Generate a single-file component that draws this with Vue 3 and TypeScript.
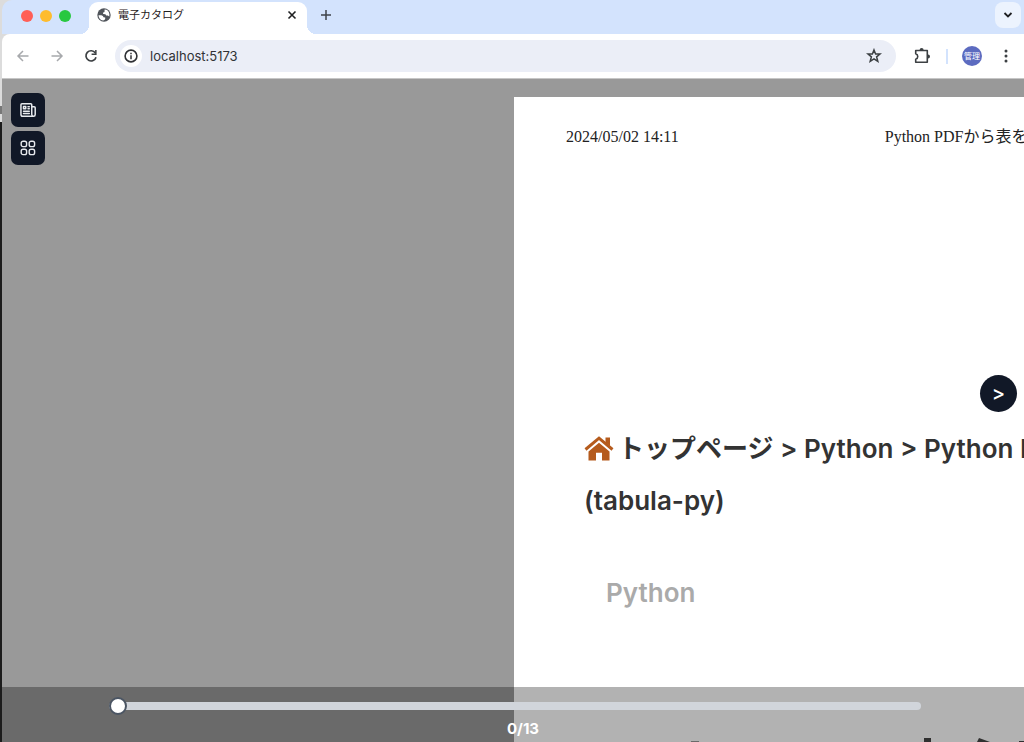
<script setup lang="ts">
import { ref } from 'vue'

const address = ref('localhost:5173')
const page = ref(0)
const total = 13

function next(): void {
  if (page.value < total) page.value++
}
</script>

<template>
  <div class="window">
    <header class="tabstrip">
      <div class="lights">
        <button class="light red" aria-label="閉じる"></button>
        <button class="light yellow" aria-label="最小化"></button>
        <button class="light green" aria-label="拡大"></button>
      </div>
      <div class="tab">
        <svg class="favicon" viewBox="0 0 14 14" aria-hidden="true">
          <circle cx="7" cy="7" r="6.7" fill="#50545a" />
          <path d="M1.5 7.2 4.4 7.3Q6.4 7.6 6.5 9.3L8.2 9.5V11.1Q7.6 12.3 6.1 12.4 1.7 11.8 1.5 7.2ZM7.6 1.6Q11.8 1.7 12.4 6.2L12.3 8.4 10.8 7.4H9.2L8.4 6.2 6.2 6 5.9 4.7 7.5 4.1Z" fill="#fff" />
        </svg>
        <span class="tab-title">電子カタログ</span>
        <button class="icon-button tab-close" aria-label="タブを閉じる">
          <svg width="10" height="10" viewBox="0 0 10 10"><path d="M1.5 1.5 8.5 8.5M8.5 1.5 1.5 8.5" stroke="#1f2022" stroke-width="1.6" /></svg>
        </button>
      </div>
      <button class="icon-button new-tab" aria-label="新しいタブ">
        <svg width="12" height="12" viewBox="0 0 12 12"><path d="M6 1V11M1 6H11" stroke="#3f4349" stroke-width="1.5" /></svg>
      </button>
      <button class="icon-button tab-search" aria-label="タブを検索">
        <svg width="10" height="8" viewBox="0 0 10 8"><path d="M1.5 2 5 5.5 8.5 2" fill="none" stroke="#1f2022" stroke-width="1.8" /></svg>
      </button>
    </header>

    <div class="toolbar">
      <button class="icon-button nav" aria-label="戻る">
        <svg width="14" height="14" viewBox="0 0 14 14"><path d="M12.5 7H2M7 2 2 7 7 12" fill="none" stroke="#a7a9ac" stroke-width="1.5" /></svg>
      </button>
      <button class="icon-button nav" aria-label="進む">
        <svg width="14" height="14" viewBox="0 0 14 14"><path d="M1.5 7H12M7 2 12 7 7 12" fill="none" stroke="#a7a9ac" stroke-width="1.5" /></svg>
      </button>
      <button class="icon-button nav" aria-label="再読み込み">
        <svg width="14" height="14" viewBox="0 0 14 14"><path d="M11.3 4A5.1 5.1 0 1 0 12 8.2" fill="none" stroke="#3c4043" stroke-width="1.7" /><path d="M12.6 1V6H7.6V4.6H11.1V1Z" fill="#3c4043" /></svg>
      </button>
      <div class="omnibox">
        <button class="icon-button site-info" aria-label="サイト情報">
          <svg width="14" height="14" viewBox="0 0 14 14"><circle cx="7" cy="7" r="5.9" fill="none" stroke="#303236" stroke-width="1.6" /><path d="M7 6.2V10.2M7 3.8V5.2" stroke="#303236" stroke-width="1.5" /></svg>
        </button>
        <input v-model="address" class="address" type="text" aria-label="アドレス" />
        <button class="icon-button" aria-label="ブックマーク">
          <svg width="16" height="16" viewBox="0 0 16 16"><path d="M8 1.9 9.6 6H14L10.6 8.8 11.8 13.4 8 10.9 4.2 13.4 5.4 8.8 2 6H6.4Z" fill="none" stroke="#3c4043" stroke-width="1.5" /></svg>
        </button>
      </div>
      <button class="icon-button extensions" aria-label="拡張機能">
        <svg width="18" height="18" viewBox="0 0 18 18">
          <path d="M2.7 3.5H14.3V15.3H2.7V12.2A2.8 2.8 0 0 0 2.7 6.8Z" fill="none" stroke="#3c4043" stroke-width="1.6" stroke-linejoin="round" />
          <path d="M6.6 3A2 2 0 0 1 10.6 3ZM15 7.4A2 2 0 0 1 15 11.4Z" fill="#3c4043" />
        </svg>
      </button>
      <span class="divider"></span>
      <button class="avatar" aria-label="プロフィール 管理">管理</button>
      <button class="icon-button menu" aria-label="メニュー">
        <svg width="4" height="14" viewBox="0 0 4 14" fill="#3c4043"><circle cx="2" cy="2" r="1.5" /><circle cx="2" cy="7" r="1.5" /><circle cx="2" cy="12" r="1.5" /></svg>
      </button>
    </div>

    <main class="viewer">
      <nav class="tools">
        <button class="tool" aria-label="見開き表示">
          <svg width="18" height="18" viewBox="0 0 24 24" fill="none" stroke="#e8eaee" stroke-width="2" stroke-linejoin="round" stroke-linecap="round">
            <path d="M17 7.5H20.2Q21.6 7.5 21.6 9V18Q21.6 20.4 19.4 20.4T17 18V5Q17 3.7 15.7 3.7H4Q2.6 3.7 2.6 5V18Q2.6 20.4 5 20.4H19.4M6 13.5H13.7M6 16.8H13.7M12 7.5H13.7M12 10.4H13.7M6 7.3H9V10.4H6Z" />
          </svg>
        </button>
        <button class="tool" aria-label="ページ一覧">
          <svg width="18" height="18" viewBox="0 0 18 18" fill="none" stroke="#e8eaee" stroke-width="1.4">
            <rect x="2.2" y="2.2" width="5.4" height="5.4" rx="1.9" /><rect x="10.2" y="2.2" width="5.4" height="5.4" rx="1.9" />
            <rect x="2.2" y="10.2" width="5.4" height="5.4" rx="1.9" /><rect x="10.2" y="10.2" width="5.4" height="5.4" rx="1.9" />
          </svg>
        </button>
      </nav>

      <article class="sheet">
        <div class="print-head">
          <time>2024/05/02 14:11</time>
          <span class="print-title">Python PDFから表を</span>
        </div>
        <div class="crumbs">
          <svg class="home" width="30" height="26" viewBox="0 0 30 26" aria-hidden="true">
            <path d="M1.5 13.5 15 2.2 28.5 13.5" fill="none" stroke="#b55b1d" stroke-width="3" />
            <path d="M21.5 1.5H26V10L21.5 6.5ZM15 6.7 25.5 15.4V24.5H18V16.8H12V24.5H4.5V15.4Z" fill="#b55b1d" />
          </svg>
          <span>トップページ &gt; Python &gt; Python P</span>
        </div>
        <div class="crumbs second">(tabula-py)</div>
        <div class="category">Python</div>
        <svg class="heading-tops" width="350" height="6" viewBox="0 0 350 6" aria-hidden="true">
          <path d="M250 2H257V6H250ZM305 2 316 6H303ZM345 5H350V6H345Z" fill="#464646" />
          <path d="M17 5H25V6H17Z" fill="#999" />
        </svg>
      </article>

      <button class="next" aria-label="次のページ" @click="next">&gt;</button>

      <footer class="pager">
        <input id="page-slider" v-model.number="page" class="slider" type="range" min="0" :max="total" />
        <label class="count" for="page-slider">{{ page }}/{{ total }}</label>
      </footer>
    </main>
  </div>
</template>

<style>
body {
  margin: 0;
}
</style>

<style scoped>
.window {
  box-sizing: border-box;
  display: flex;
  flex-direction: column;
  height: 100vh;
  padding-left: 2px;
  overflow: hidden;
  background: linear-gradient(#dcdcdc 0 106px, #777 106px 114px, #dcdcdc 114px 122px, #1c1c1c 122px);
  font-family: Inter, "Noto Sans CJK JP", sans-serif;
}

button {
  flex: none;
  padding: 0;
  border: 0;
  background: none;
  font-family: inherit;
}

svg {
  display: block;
  flex: none;
}

.icon-button {
  display: flex;
  align-items: center;
  justify-content: center;
}

.tabstrip {
  display: flex;
  flex: none;
  align-items: center;
  height: 34px;
  border-top-left-radius: 10px;
  background: #d3e3fd;
}

.lights {
  display: flex;
  gap: 7px;
  margin: 0 18px 3px 19px;
}

.light {
  width: 12px;
  height: 12px;
  border-radius: 50%;
}

.red {
  background: #ff5f57;
}

.yellow {
  background: #febc2e;
}

.green {
  background: #28c840;
}

.tab {
  position: relative;
  box-sizing: border-box;
  display: flex;
  align-items: center;
  width: 218px;
  height: 32px;
  align-self: flex-end;
  padding: 0 10px 6px 8px;
  border-radius: 9px 9px 0 0;
  background: #fff;
}

.tab::before,
.tab::after {
  content: "";
  position: absolute;
  bottom: 0;
  width: 9px;
  height: 9px;
}

.tab::before {
  right: 100%;
  background: radial-gradient(circle at 0 0, transparent 9px, #fff 9px);
}

.tab::after {
  left: 100%;
  background: radial-gradient(circle at 100% 0, transparent 9px, #fff 9px);
}

.favicon {
  width: 14px;
  height: 14px;
}

.tab-title {
  flex: 1;
  margin-left: 7px;
  color: #1f2022;
  font-size: 11px;
  line-height: 16px;
}

.new-tab {
  margin: 0 0 4px 13px;
}

.tab-search {
  width: 26px;
  height: 26px;
  margin: 0 3px 4px auto;
  border-radius: 8px;
  background: #ecf3fe;
}

.toolbar {
  box-sizing: border-box;
  display: flex;
  flex: none;
  align-items: center;
  height: 45px;
  padding: 0 16px 0 14px;
  border-bottom: 1px solid #c6c6c6;
  border-top-left-radius: 8px;
  background: #fff;
}

.nav {
  margin-right: 20px;
}

.omnibox {
  box-sizing: border-box;
  display: flex;
  flex: 1;
  align-items: center;
  height: 32px;
  margin-left: -3px;
  padding: 0 14px 0 5px;
  border-radius: 16px;
  background: #ebeef7;
}

.site-info {
  width: 22px;
  height: 22px;
  border-radius: 50%;
  background: #fff;
}

.address {
  flex: 1;
  min-width: 0;
  margin-left: 8px;
  padding: 0;
  border: 0;
  outline: 0;
  background: none;
  color: #303236;
  font-family: inherit;
  font-size: 13px;
  line-height: 20px;
}

.extensions {
  margin: 0 15px 0 17px;
}

.divider {
  width: 2px;
  height: 15px;
  margin-right: 14px;
  background: #d3e3fd;
}

.avatar {
  width: 20px;
  height: 20px;
  margin-right: 22px;
  border-radius: 50%;
  background: #5c6bc0;
  color: #fff;
  font-size: 8px;
  line-height: 20px;
}

.viewer {
  position: relative;
  display: grid;
  flex: 1;
  grid-template-columns: 1fr 1fr;
  min-height: 0;
  background: #999;
}

.tools {
  display: flex;
  flex-direction: column;
  gap: 4px;
  padding: 14px 0 0 9px;
}

.tool {
  display: flex;
  align-items: center;
  justify-content: center;
  width: 34px;
  height: 34px;
  border-radius: 7px;
  background: #111827;
}

.sheet {
  min-width: 0;
  margin: 18px 0 0 1px;
  overflow: hidden;
  background: #fff;
  white-space: nowrap;
}

.print-head {
  display: flex;
  gap: 206px;
  padding: 28px 0 0 52px;
  color: #222;
  font-family: "Liberation Serif", "Noto Sans CJK JP", serif;
  font-size: 16px;
  line-height: 24px;
}

.crumbs {
  display: flex;
  align-items: center;
  gap: 4px;
  margin: 274px 0 0 70px;
  color: #333;
  font-size: 26px;
  font-weight: 600;
  line-height: 52px;
}

.second {
  margin-top: 0;
}

.category {
  margin: 40px 0 0 92px;
  color: #aaa;
  font-size: 26px;
  font-weight: 600;
  line-height: 52px;
}

.heading-tops {
  margin: 117px 0 0 160px;
}

.next {
  position: absolute;
  top: calc(50% - 36px);
  right: 7px;
  width: 37px;
  height: 37px;
  border-radius: 50%;
  background: #111827;
  color: #fff;
  font-size: 20px;
  font-weight: 500;
  line-height: 37px;
}

.pager {
  position: absolute;
  right: 0;
  bottom: 0;
  left: 0;
  display: flex;
  flex-direction: column;
  height: 55px;
  background: rgba(0, 0, 0, 0.3);
}

.slider {
  height: 18px;
  margin: 10px 103px 0 107px;
  appearance: none;
  background: none;
}

.slider::-webkit-slider-runnable-track {
  height: 8px;
  border-radius: 4px;
  background: #d1d5db;
}

.slider::-webkit-slider-thumb {
  box-sizing: border-box;
  width: 18px;
  height: 18px;
  margin-top: -5px;
  appearance: none;
  border: 2px solid #4b5563;
  border-radius: 50%;
  background: #fff;
}

.count {
  padding: 4px 0 0 20px;
  color: #fff;
  font-size: 15px;
  font-weight: 700;
  line-height: 20px;
  text-align: center;
}
</style>
